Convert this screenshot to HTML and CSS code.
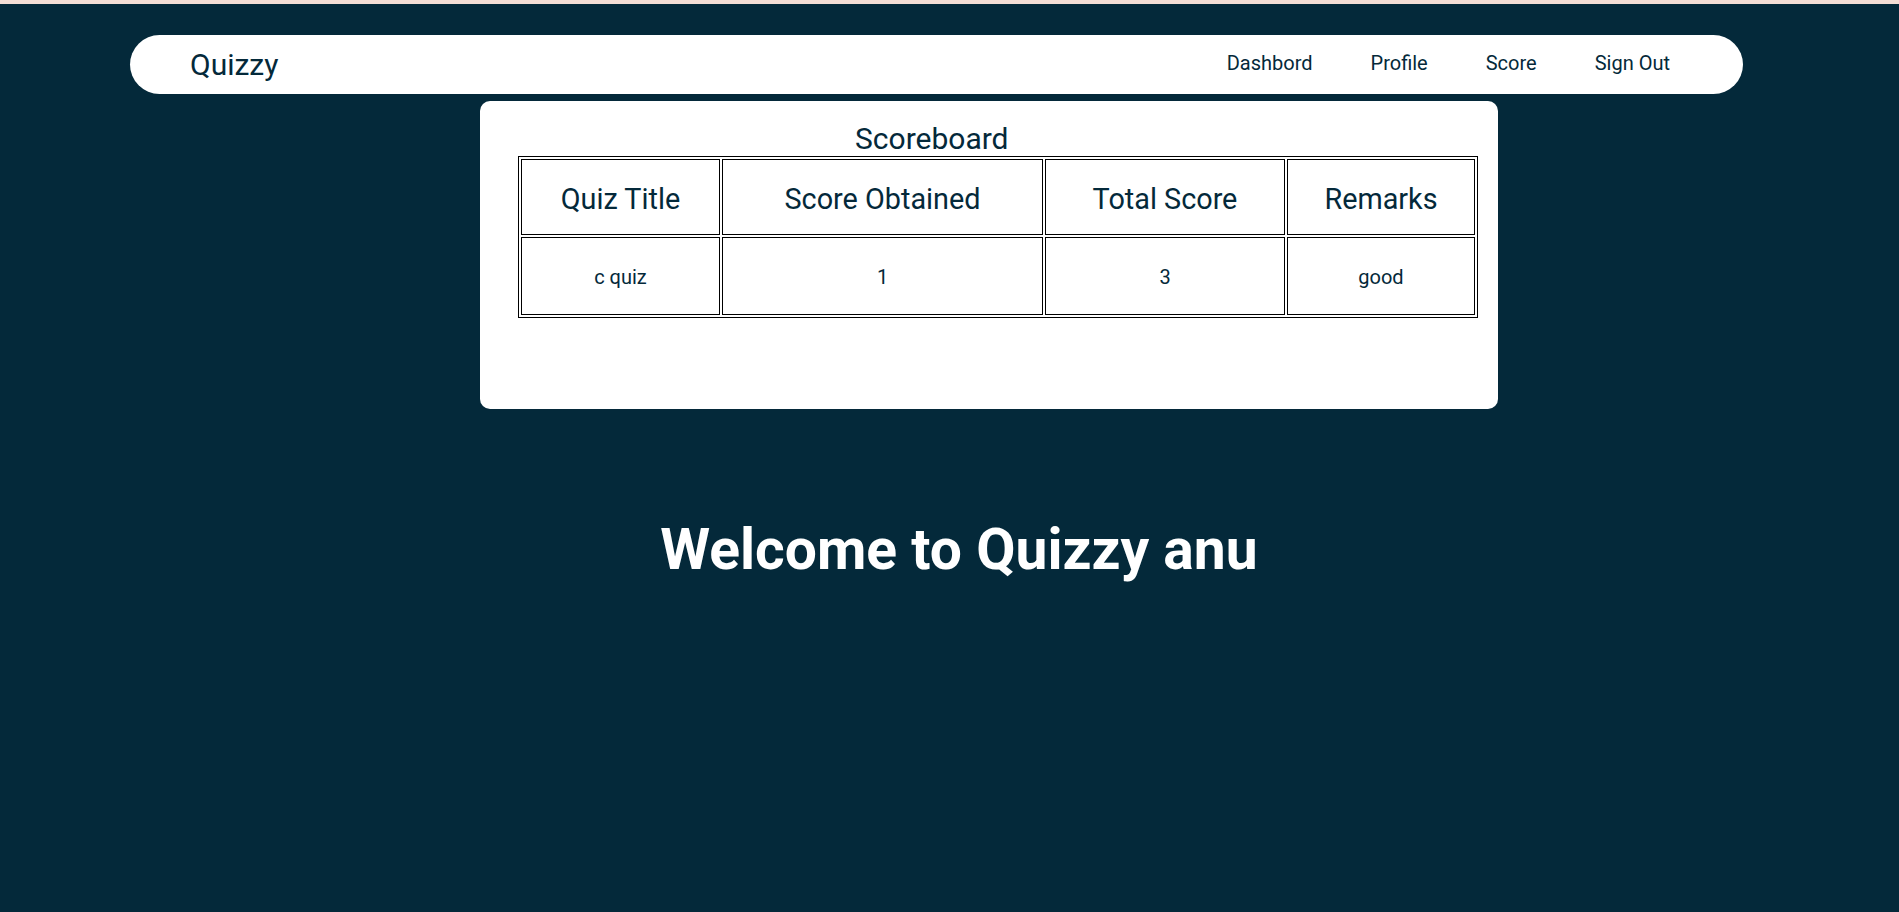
FILE: index.html
```html
<!DOCTYPE html>
<html lang="en">
<head>
<meta charset="utf-8">
<title>Quizzy - Score</title>
<link rel="stylesheet" href="styles.css">
</head>
<body>
<div class="topstrip"></div>
<nav class="navbar">
  <div class="brand">Quizzy</div>
  <ul class="links">
    <li><a href="#">Dashbord</a></li>
    <li><a href="#">Profile</a></li>
    <li><a href="#">Score</a></li>
    <li><a href="#">Sign Out</a></li>
  </ul>
</nav>
<section class="card">
  <div class="card-title">Scoreboard</div>
  <table class="scores">
    <thead>
      <tr>
        <th class="c1">Quiz Title</th>
        <th class="c2">Score Obtained</th>
        <th class="c3">Total Score</th>
        <th class="c4">Remarks</th>
      </tr>
    </thead>
    <tbody>
      <tr>
        <td>c quiz</td>
        <td>1</td>
        <td>3</td>
        <td>good</td>
      </tr>
    </tbody>
  </table>
</section>
<h1 class="welcome">Welcome to Quizzy anu</h1>
</body>
</html>
```
FILE: styles.css
```css
* { box-sizing: border-box; }
html, body {
  margin: 0;
  padding: 0;
  background: #04293a;
  font-family: Roboto, "Liberation Sans", sans-serif;
  min-height: 912px;
}
.topstrip {
  height: 4px;
  background: #f4ded5;
}
.navbar {
  margin: 31px 0 0 130px;
  width: 1613px;
  height: 59px;
  background: #ffffff;
  border-radius: 30px;
  display: flex;
  align-items: center;
  justify-content: space-between;
  padding: 0 73px 0 60px;
}
.brand {
  font-size: 30px;
  color: #04293a;
}
.links {
  list-style: none;
  margin: 0;
  padding: 0 0 4px;
  display: flex;
  gap: 58px;
}
.links a {
  font-size: 20px;
  color: #04293a;
  text-decoration: none;
}
.card {
  margin: 7px 0 0 480px;
  width: 1018px;
  height: 308px;
  background: #ffffff;
  border-radius: 10px;
  padding: 20px 20px 0 38px;
}
.card-title {
  font-size: 30px;
  color: #04293a;
  padding-left: 337px;
}
.scores {
  width: 960px;
  table-layout: fixed;
  border: 1px solid #000;
  border-spacing: 2px;
  color: #04293a;
}
.scores th, .scores td {
  border: 1px solid #000;
  text-align: center;
  padding: 0;
}
.scores th {
  font-size: 28.8px;
  font-weight: 400;
  height: 76px;
  padding-top: 3px;
}
.scores td {
  font-size: 20px;
  height: 78px;
  padding-top: 2px;
}
.c1 { width: 199px; }
.c2 { width: 321px; }
.c3 { width: 240px; }
.c4 { width: 188px; }
.welcome {
  margin: 107px 0 0;
  text-align: center;
  font-size: 57px;
  font-weight: 700;
  color: #ffffff;
  padding-left: 19px;
}
```
